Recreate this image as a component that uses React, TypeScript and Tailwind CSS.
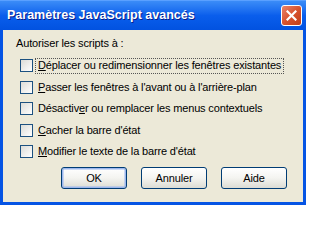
import React from 'react';

const options = [
  { pre: '', key: 'D', post: 'éplacer ou redimensionner les fenêtres existantes', focused: true },
  { pre: '', key: 'P', post: 'asser les fenêtres à l\'avant ou à l\'arrière-plan' },
  { pre: 'Désactiv', key: 'e', post: 'r ou remplacer les menus contextuels' },
  { pre: '', key: 'C', post: 'acher la barre d\'état' },
  { pre: '', key: 'M', post: 'odifier le texte de la barre d\'état' },
];

const buttons = [
  { label: 'OK', isDefault: true },
  { label: 'Annuler' },
  { label: 'Aide' },
];

const font = { fontFamily: '"Liberation Sans", Arial, sans-serif' };

const Checkbox: React.FC = () => (
  <span className="block w-[13px] h-[13px] shrink-0 border border-[#1c5180] bg-gradient-to-br from-[#dcdcd7] to-[#ffffff]" />
);

const App: React.FC = () => {
  return (
    <div className="w-[306px] h-[205px] flex flex-col bg-[#0554e4] overflow-hidden">
      {/* Title bar */}
      <div className="h-[30px] shrink-0 flex items-center pl-[7px] pr-[4px] bg-gradient-to-b from-[#3b8cf7] via-[#0a5eec] to-[#0252e0] border-t border-[#5aa0ff]">
        <span
          className="flex-1 text-white font-bold text-[12.5px] leading-none [text-shadow:1px_1px_0_#0a1e8a]"
          style={font}
        >
          Paramètres JavaScript avancés
        </span>
        <button className="w-[21px] h-[21px] rounded-[3px] border border-white bg-gradient-to-br from-[#e9826a] via-[#d8532e] to-[#c13e16] flex items-center justify-center">
          <svg width="11" height="11" viewBox="0 0 11 11">
            <path d="M1.5 1.5 L9.5 9.5 M9.5 1.5 L1.5 9.5" stroke="white" strokeWidth="2.2" strokeLinecap="square" />
          </svg>
        </button>
      </div>

      {/* Body */}
      <div className="flex-1 mx-[3px] mb-[3px] bg-[#ece9d8] text-black text-[11px] leading-[13px] tracking-[-0.15px]" style={font}>
        <p className="pt-[7px] pl-[13px] whitespace-nowrap">Autoriser les scripts à :</p>

        <div className="mt-[4.75px] pl-[17px]">
          {options.map((o, i) => (
            <div key={i} className="h-[21.5px] flex items-center">
              <Checkbox />
              <span
                className={`ml-[2px] h-[16px] inline-flex items-center whitespace-nowrap px-[2px] border border-dotted ${
                  o.focused ? 'border-[#555]' : 'border-transparent'
                }`}
              >
                {o.pre}
                <span className="underline underline-offset-[1px]">{o.key}</span>
                {o.post}
              </span>
            </div>
          ))}
        </div>

        <div className="mt-[4.75px] flex justify-end gap-[14px] pr-[16px]">
          {buttons.map((b) => (
            <button
              key={b.label}
              className={`w-[66px] h-[22px] rounded-[3px] border border-[#003c74] bg-gradient-to-b from-[#ffffff] via-[#f4f4f0] to-[#dcdcd4] text-[11px] ${
                b.isDefault ? 'shadow-[inset_0_0_0_1.5px_#9cb7ee]' : ''
              }`}
              style={font}
            >
              {b.label}
            </button>
          ))}
        </div>
      </div>
    </div>
  );
};

export default App;
